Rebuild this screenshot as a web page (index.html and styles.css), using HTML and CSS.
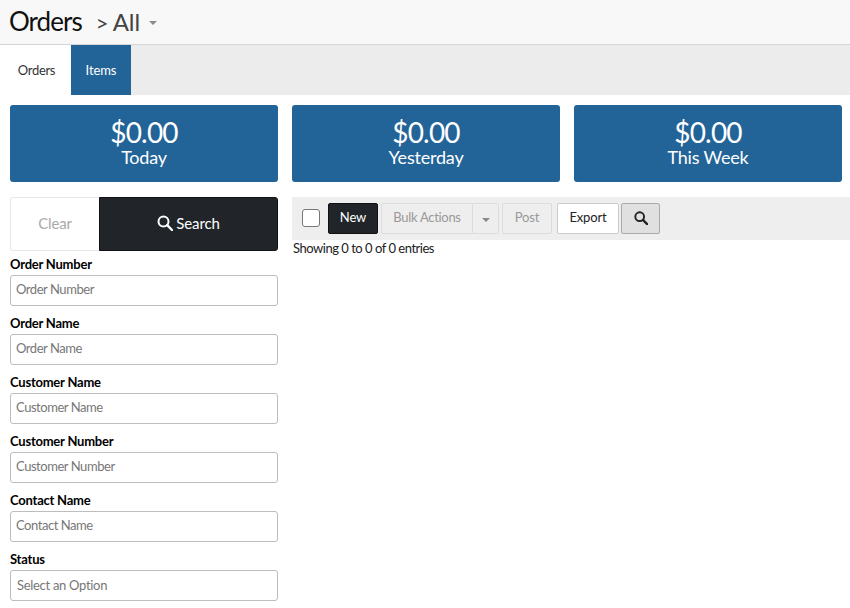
FILE: index.html
```html
<!DOCTYPE html>
<html lang="en">
<head>
<meta charset="utf-8">
<title>Orders</title>
<link rel="stylesheet" href="styles.css">
</head>
<body>
<header class="page-header">
  <h1 class="title">Orders</h1>
  <span class="crumb"><span class="crumb-sep">&gt;</span> All</span>
  <span class="caret caret-header"></span>
</header>
<nav class="tabs">
  <a class="tab">Orders</a>
  <a class="tab tab-active">Items</a>
</nav>
<section class="cards">
  <div class="card"><div class="card-value">$0.00</div><div class="card-label">Today</div></div>
  <div class="card"><div class="card-value">$0.00</div><div class="card-label">Yesterday</div></div>
  <div class="card"><div class="card-value">$0.00</div><div class="card-label">This Week</div></div>
</section>
<main class="content">
  <aside class="sidebar">
    <div class="search-actions">
      <button class="btn-clear">Clear</button>
      <button class="btn-search">
        <svg class="icon-search" viewBox="0 0 16 16"><circle cx="6.5" cy="6.5" r="5" fill="none" stroke="currentColor" stroke-width="2"/><path d="M10.2 10.2 15 15" stroke="currentColor" stroke-width="2.4" stroke-linecap="round"/></svg>
        Search
      </button>
    </div>
    <div class="field"><label class="field-label">Order Number</label><input class="field-input" placeholder="Order Number"></div>
    <div class="field"><label class="field-label">Order Name</label><input class="field-input" placeholder="Order Name"></div>
    <div class="field"><label class="field-label">Customer Name</label><input class="field-input" placeholder="Customer Name"></div>
    <div class="field"><label class="field-label">Customer Number</label><input class="field-input" placeholder="Customer Number"></div>
    <div class="field"><label class="field-label">Contact Name</label><input class="field-input" placeholder="Contact Name"></div>
    <div class="field"><label class="field-label">Status</label><input class="field-input field-select" placeholder="Select an Option"></div>
  </aside>
  <section class="results">
    <div class="toolbar">
      <span class="checkbox"></span>
      <button class="tbtn tbtn-new">New</button>
      <div class="split">
        <button class="tbtn tbtn-disabled split-main">Bulk Actions</button>
        <button class="tbtn tbtn-disabled split-caret"><span class="caret caret-small"></span></button>
      </div>
      <button class="tbtn tbtn-disabled tbtn-post">Post</button>
      <button class="tbtn tbtn-export">Export</button>
      <button class="tbtn tbtn-find">
        <svg class="icon-find" viewBox="0 0 16 16"><circle cx="6.5" cy="6.5" r="5" fill="none" stroke="currentColor" stroke-width="2.2"/><path d="M10.2 10.2 15 15" stroke="currentColor" stroke-width="2.6" stroke-linecap="round"/></svg>
      </button>
    </div>
    <p class="entries">Showing 0 to 0 of 0 entries</p>
  </section>
</main>
</body>
</html>
```
FILE: styles.css
```css
* { box-sizing: border-box; }
html, body { margin: 0; padding: 0; }
body {
  width: 850px;
  height: 608px;
  overflow: hidden;
  background: #fff;
  color: #212529;
  font-family: "Lato", "Noto Sans", sans-serif;
  font-size: 14px;
}
button { font-family: inherit; margin: 0; }

.page-header {
  height: 45px;
  display: flex;
  align-items: center;
  padding-left: 9px;
  padding-bottom: 2px;
  background: #f8f8f8;
  border-bottom: 1px solid #d6d6d6;
}
.title { margin: 0; font-size: 26px; font-weight: 400; color: #111; letter-spacing: -0.95px; }
.crumb { margin-left: 14px; font-size: 24px; color: #444; letter-spacing: -0.1px; }
.crumb-sep { font-size: 22px; letter-spacing: -1px; }
.caret {
  display: inline-block;
  width: 0;
  height: 0;
  border-left: 4px solid transparent;
  border-right: 4px solid transparent;
  border-top: 4px solid #8a8a8a;
}
.caret-header { margin-left: 9px; margin-top: 4px; }

.tabs { height: 50px; display: flex; background: #ececec; }
.tab { display: flex; align-items: center; justify-content: center; font-size: 13px; padding-bottom: 1px; }
.tab:first-child { width: 73px; background: #fff; color: #333; letter-spacing: -0.3px; }
.tab-active { width: 60px; margin-left: -2px; background: #236498; color: #fff; letter-spacing: -0.1px; }

.cards { display: flex; gap: 14px; padding: 10px 8px 0 10px; }
.card {
  flex: 1;
  height: 77px;
  background: #236498;
  color: #fff;
  border-radius: 3px;
  text-align: center;
  padding-top: 11px;
}
.card-value { font-size: 28px; line-height: 32px; letter-spacing: -0.8px; }
.card-label { font-size: 18px; line-height: 19px; letter-spacing: -0.2px; }

.content { display: flex; gap: 14px; padding: 15px 0 0 10px; }
.sidebar { width: 268px; flex: none; }
.search-actions { display: flex; height: 54px; }
.btn-clear {
  width: 89px;
  padding: 0 0 2px;
  background: #fff;
  border: 1px solid #e8e8e8;
  border-right: 0;
  border-radius: 3px 0 0 3px;
  color: #aaa;
  font-size: 15px;
  letter-spacing: -0.2px;
}
.btn-search {
  flex: 1;
  display: flex;
  align-items: center;
  justify-content: center;
  gap: 3px;
  padding: 0 0 2px;
  background: #212529;
  border: 1px solid #111;
  border-radius: 0 3px 3px 0;
  color: #fff;
  font-size: 15px;
  letter-spacing: -0.1px;
}
.icon-search { width: 16px; height: 16px; }

.field { height: 59px; padding-top: 5px; }
.field-label { display: block; height: 19px; line-height: 16px; font-size: 13px; font-weight: 700; color: #000; letter-spacing: -0.22px; }
.field-input {
  display: block;
  width: 100%;
  height: 31px;
  padding: 0 5px 3px;
  font-family: inherit;
  font-size: 13px;
  letter-spacing: -0.45px;
  border: 1px solid #bdbdbd;
  border-radius: 3px;
  background: #fff;
  outline: 0;
}
.field-input::placeholder { color: #777; opacity: 1; }
.field-select { padding-left: 6px; padding-bottom: 2px; letter-spacing: -0.3px; }

.results { flex: 1; min-width: 0; }
.toolbar {
  height: 43px;
  display: flex;
  align-items: center;
  padding-left: 10px;
  background: #eee;
}
.checkbox {
  width: 18px;
  height: 18px;
  margin-right: 8px;
  margin-bottom: 1px;
  background: #fff;
  border: 1px solid #777;
  border-radius: 3px;
}
.tbtn { height: 31px; font-size: 13px; padding: 0 0 3px; border-radius: 2px; letter-spacing: -0.15px; }
.tbtn-new { width: 50px; background: #212529; border: 1px solid #111; color: #fff; margin-right: 3px; }
.tbtn-disabled { background: #eee; border: 1px solid #dcdcdc; color: #999; }
.split { display: flex; margin-right: 3px; }
.split-main { width: 92px; border-radius: 2px 0 0 2px; letter-spacing: -0.3px; }
.split-caret { width: 26px; padding: 0; border-left: 0; border-radius: 0 2px 2px 0; }
.caret-small { vertical-align: middle; }
.tbtn-post { width: 50px; margin-right: 5px; }
.tbtn-export { width: 62px; background: #fff; border: 1px solid #ccc; color: #222; margin-right: 2px; }
.tbtn-find { width: 39px; padding: 0 0 2px; background: #e0e0e0; border: 1px solid #aaa; color: #222; display: flex; align-items: center; justify-content: center; }
.icon-find { width: 14px; height: 14px; }
.entries { margin: 0 0 0 1px; font-size: 13px; line-height: 16px; letter-spacing: -0.48px; color: #222; }
```
